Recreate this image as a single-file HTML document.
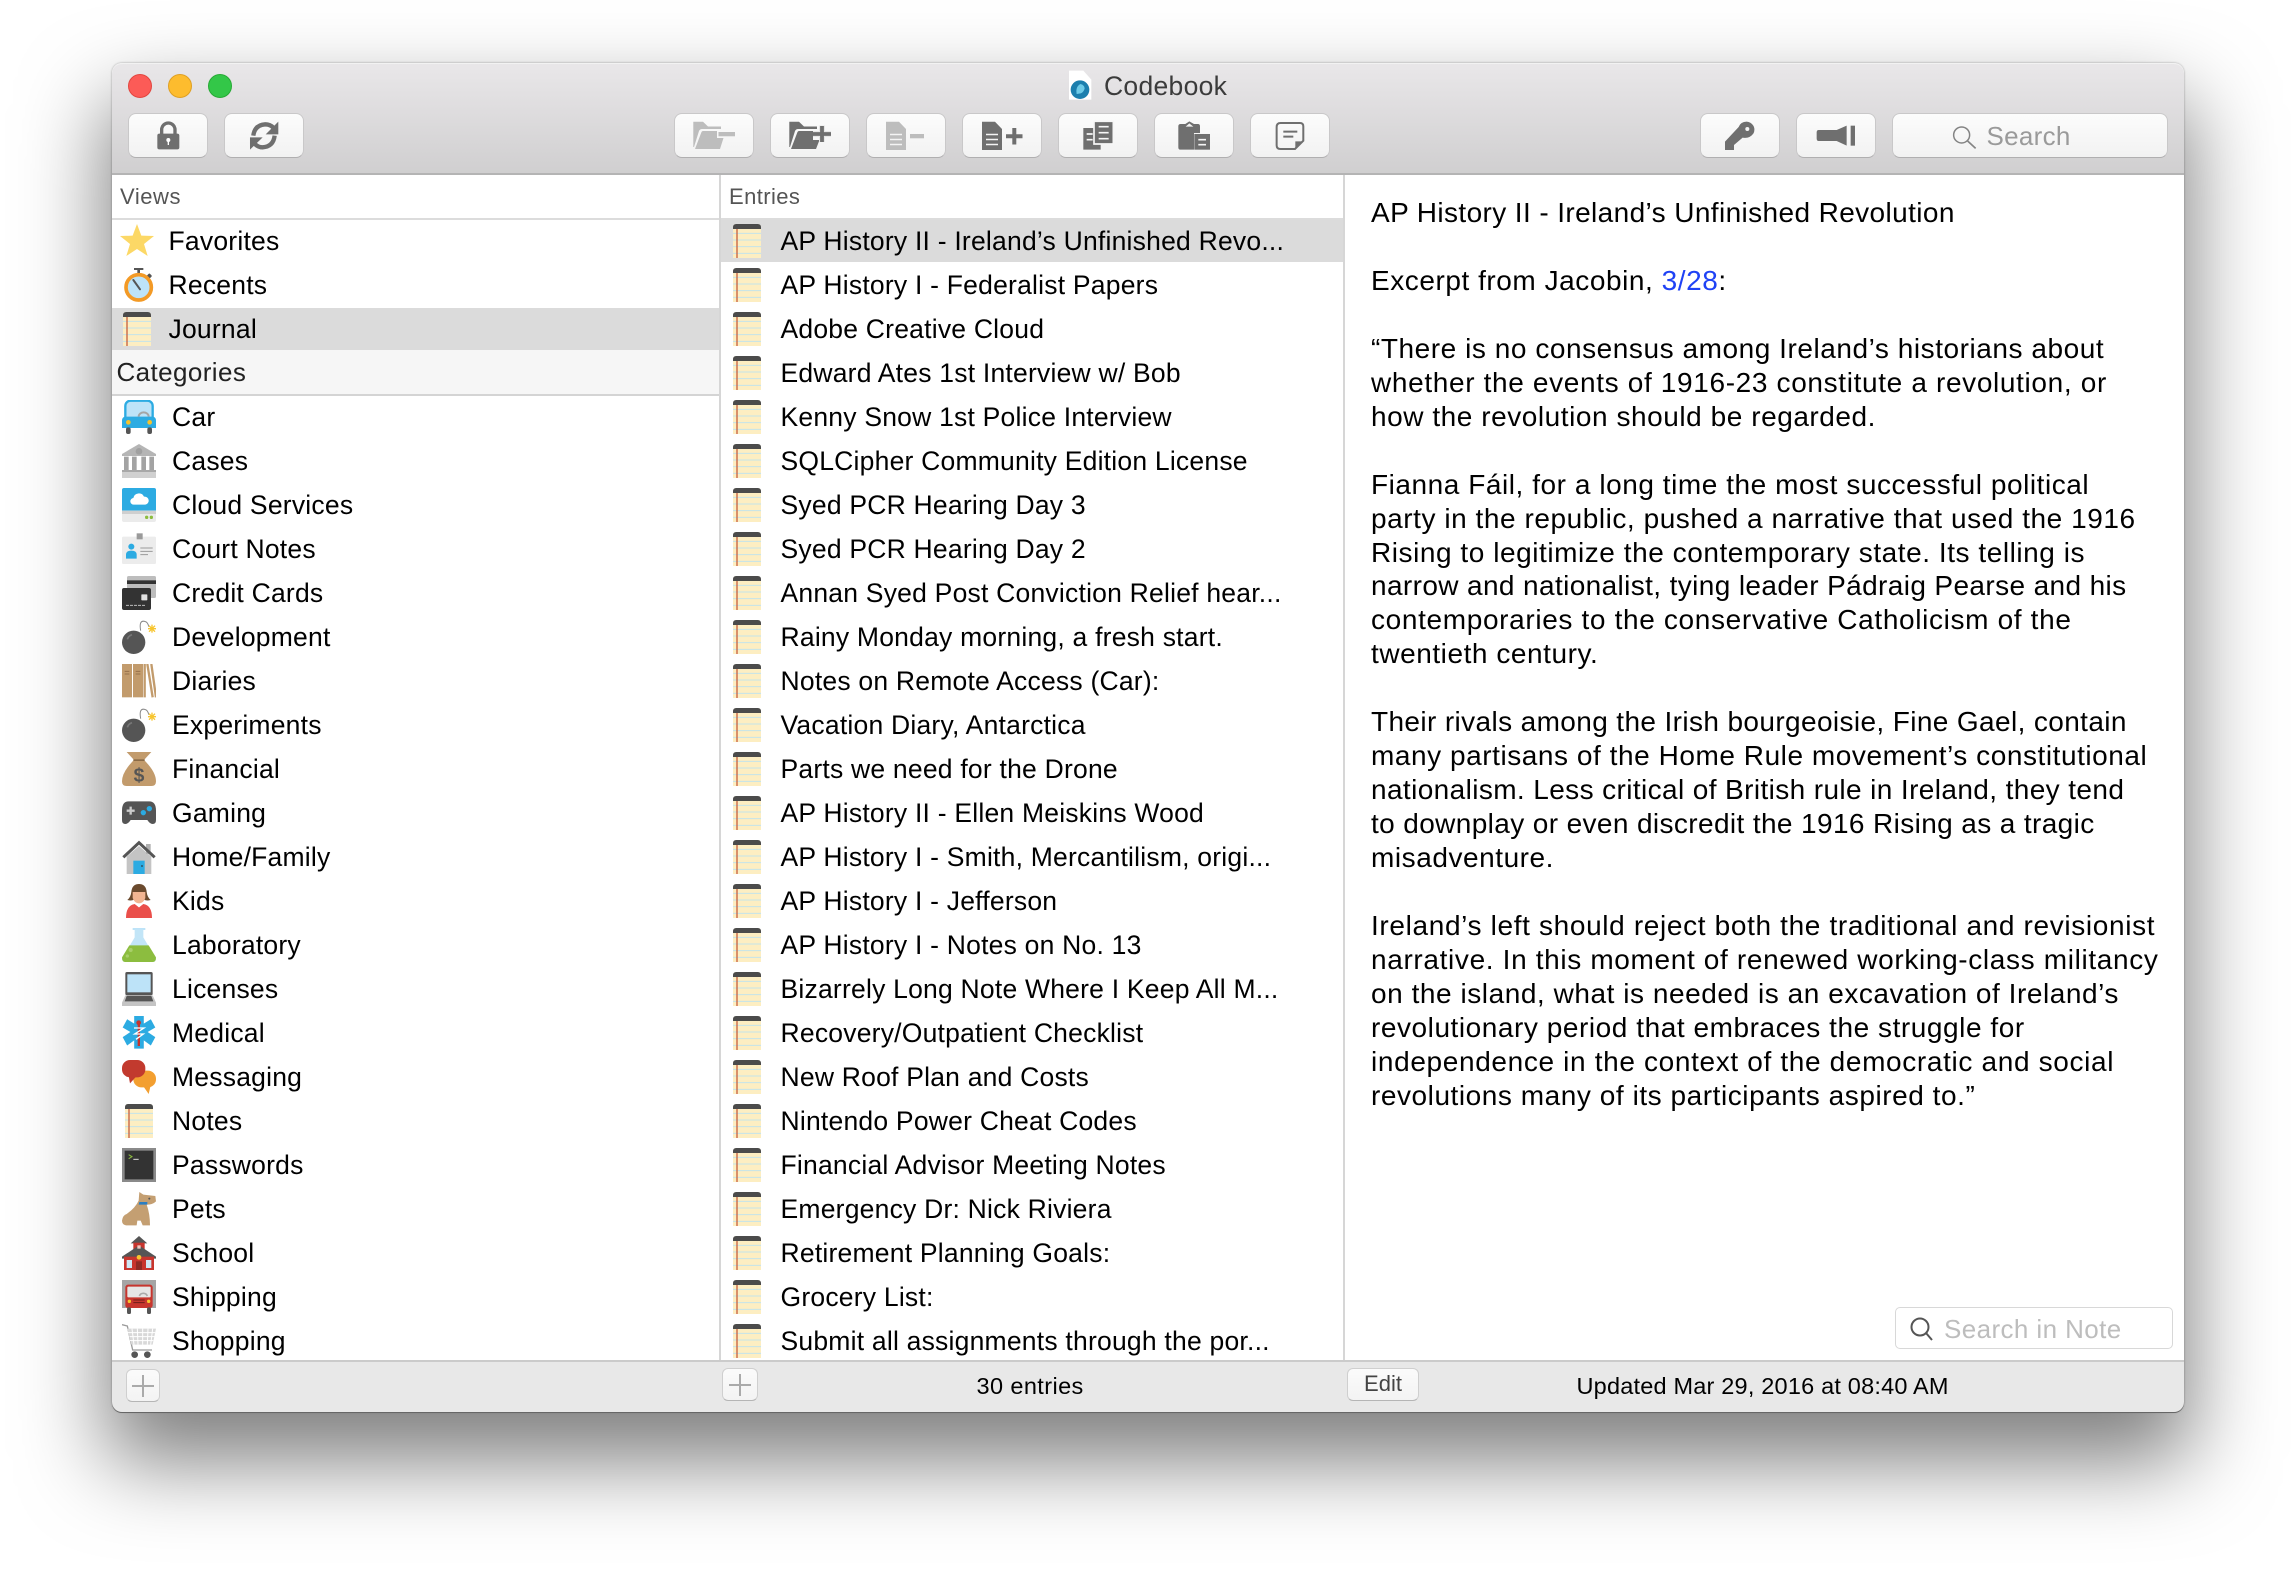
<!DOCTYPE html>
<html><head><meta charset="utf-8"><title>Codebook</title>
<style>
html,body{margin:0;padding:0;background:#fff}
body{width:2296px;height:1572px;position:relative;overflow:hidden;font-family:"Liberation Sans",sans-serif;color:#000}
#win{position:absolute;left:111.5px;top:63px;width:2072.5px;height:1349px;border-radius:10px;background:#fff;box-shadow:0 44px 84px 6px rgba(0,0,0,.5),0 0 2px rgba(0,0,0,.35)}
#tb{position:absolute;left:111.5px;top:63px;width:2072.5px;height:110px;border-radius:10px 10px 0 0;background:linear-gradient(#e9e7e9,#d0cfd0);box-shadow:inset 0 1px 0 #f2f2f2;border-bottom:2px solid #b4b4b4;box-sizing:content-box}
.a{position:absolute;white-space:nowrap}
.b{position:absolute;top:113px;height:45px;box-sizing:border-box;border-radius:8px;background:linear-gradient(#fcfcfc,#f2f2f2);border:1px solid #c9c8c9;border-bottom-color:#b0afb0}
.tl{position:absolute;top:74px;width:24px;height:24px;border-radius:50%;box-sizing:border-box}
.r{position:absolute;height:44px;line-height:44px;font-size:26.5px;letter-spacing:.22px;white-space:nowrap}
.sel{position:absolute;background:#dbdbdb}
svg.i{position:absolute;width:34px;height:34px}
svg.n{position:absolute;width:28px;height:34px}
#v{position:absolute;left:168.5px;top:218.5px}
#c{position:absolute;left:172px;top:394.5px}
#e{position:absolute;left:780.5px;top:218.5px}
#v .r,#c .r,#e .r{position:relative;height:44px}
#tx{position:absolute;left:1371px;top:196px;font-size:28px;letter-spacing:.55px;line-height:33.96px;white-space:nowrap}
.t1{letter-spacing:.39px}.t2{letter-spacing:.38px}.t3{letter-spacing:.65px}
</style></head><body>
<svg width="0" height="0" style="position:absolute"><defs>
<symbol id="note" viewBox="0 0 84 102"><path d="M0 12Q0 0 10 0H74Q84 0 84 12V102H0Z" fill="#fdeec2"/><path d="M0 10Q0 0 10 0H74Q84 0 84 10V15H0Z" fill="#4b4b4b"/><path d="M0 28H84M0 48H84M0 68H84M0 88H84" stroke="#c4e4ea" stroke-width="3"/><rect x="10" y="15" width="4" height="87" fill="#c9623f"/></symbol>
<symbol id="star" viewBox="0 0 102 102"><path d="M51 0L64 35L102 36L72 60L83 96L51 75L19 96L30 60L0 36L38 35Z" fill="#fcd866"/></symbol>
<symbol id="watch" viewBox="0 0 102 102"><rect x="36" y="0" width="28" height="6" fill="#555"/><rect x="46" y="4" width="8" height="16" fill="#555"/><rect x="76" y="18" width="12" height="12" rx="3" transform="rotate(45 82 24)" fill="#555"/><circle cx="50" cy="58" r="38" fill="#bde3f8" stroke="#f39a26" stroke-width="11"/><path d="M34 36L54 64" stroke="#555" stroke-width="6" stroke-linecap="round"/></symbol>
<symbol id="car" viewBox="0 0 102 102"><rect x="10" y="2" width="82" height="66" rx="16" fill="#bde3f8" stroke="#2cabe2" stroke-width="7"/><path d="M50 50a14 12 0 0 1 30 0" fill="none" stroke="#a5a5a5" stroke-width="6"/><path d="M12 50H90Q102 50 102 62V84H0V62Q0 50 12 50Z" fill="#2cabe2"/><circle cx="19" cy="67" r="7" fill="#f6c22c"/><circle cx="83" cy="67" r="7" fill="#f6c22c"/><rect x="12" y="82" width="14" height="20" rx="6" fill="#555"/><rect x="76" y="82" width="14" height="20" rx="6" fill="#555"/></symbol>
<symbol id="bank" viewBox="0 0 102 102"><path d="M51 0L102 30V36H0V30Z" fill="#b5b5b5"/><circle cx="51" cy="22" r="10" fill="#a0a0a0"/><path d="M6 38H20V78H6ZM30 38H44V78H30ZM58 38H72V78H58ZM82 38H96V78H82Z" fill="#a3a3a3"/><rect x="0" y="78" width="102" height="6" fill="#a8a8a8"/><rect x="0" y="84" width="102" height="18" fill="#d0d0d0"/></symbol>
<symbol id="cloud" viewBox="0 0 102 102"><path d="M6 0H96Q102 0 102 6V68H0V6Q0 0 6 0Z" fill="#2cabe2"/><path d="M0 68H102V96Q102 102 96 102H6Q0 102 0 96Z" fill="#ebebeb"/><rect y="68" width="102" height="10" fill="#cfcfcf"/><circle cx="74" cy="88" r="5" fill="#8cbd3f"/><circle cx="88" cy="88" r="5" fill="#8cbd3f"/><path d="M36 50a10 10 0 0 1-2-20a17 17 0 0 1 32-4a12 12 0 0 1 4 24Z" fill="#fff"/></symbol>
<symbol id="badge" viewBox="0 0 102 102"><rect y="14" width="102" height="82" rx="4" fill="#ececec"/><rect x="44" y="4" width="18" height="18" fill="#9a9a9a"/><circle cx="28" cy="44" r="9" fill="#2cabe2"/><path d="M12 80V68Q12 56 28 56Q44 56 44 68V80Z" fill="#2cabe2"/><path d="M55 48H92M55 58H92M55 68H78" stroke="#9a9a9a" stroke-width="3"/></symbol>
<symbol id="cards" viewBox="0 0 102 102"><rect x="15" y="0" width="87" height="66" rx="5" fill="#bdbdbd"/><rect x="15" y="13" width="87" height="11" fill="#333"/><rect y="36" width="87" height="66" rx="6" fill="#333"/><rect x="58" y="55" width="18" height="18" rx="2" fill="#e2e2e2"/><path d="M12 88H72" stroke="#bbb" stroke-width="3" stroke-dasharray="9 3"/></symbol>
<symbol id="bomb" viewBox="0 0 102 102"><path d="M56 32Q50 0 68 4Q78 6 80 20" fill="none" stroke="#888" stroke-width="3"/><circle cx="35" cy="67" r="35" fill="#555"/><path d="M16 58a22 22 0 0 1 14-14" stroke="#777" stroke-width="5" fill="none"/><path d="M90 14V38M78 26H102M81 17L99 35M99 17L81 35" stroke="#f7c52e" stroke-width="4"/></symbol>
<symbol id="books" viewBox="0 0 102 102"><rect width="30" height="100" fill="#c29b6c"/><rect x="33" width="30" height="100" fill="#c29b6c"/><path d="M8 22H22M8 30H22M41 22H55M41 30H55" stroke="#96704a" stroke-width="3"/><path d="M68 100V0M76 0L92 100M88 0L102 100" stroke="#c29b6c" stroke-width="7"/></symbol>
<symbol id="bag" viewBox="0 0 102 102"><path d="M14 0H88L66 24H36Z" fill="#c29b6c"/><path d="M34 26H68Q102 60 102 88Q102 102 88 102H14Q0 102 0 88Q0 60 34 26Z" fill="#c29b6c"/><rect x="34" y="22" width="34" height="5" fill="#8a6a45"/><text x="51" y="89" font-family="Liberation Sans,sans-serif" font-weight="bold" font-size="58" fill="#555" text-anchor="middle">$</text></symbol>
<symbol id="pad" viewBox="0 0 102 102"><path d="M20 16H82Q102 16 102 44V72Q102 84 92 84Q84 84 76 72H26Q18 84 10 84Q0 84 0 72V44Q0 16 20 16Z" fill="#555"/><path d="M26 32V56M14 44H38" stroke="#ccc" stroke-width="7"/><circle cx="64" cy="50" r="8" fill="#2cabe2"/><circle cx="82" cy="38" r="8" fill="#2cabe2"/></symbol>
<symbol id="home" viewBox="0 0 102 102"><path d="M14 50L51 18L88 50V102H14Z" fill="#c4c4c4"/><rect x="72" y="12" width="14" height="30" fill="#b0b0b0"/><path d="M4 52L51 8L98 52" fill="none" stroke="#555" stroke-width="9"/><rect x="34" y="62" width="34" height="40" fill="#2cabe2"/><circle cx="60" cy="78" r="2.5" fill="#333"/></symbol>
<symbol id="kid" viewBox="0 0 102 102"><path d="M51 0Q30 0 28 24Q26 40 16 48Q30 52 36 46H66Q72 52 86 48Q76 40 74 24Q72 0 51 0Z" fill="#6b4a2e"/><path d="M32 24H70V42Q64 58 51 58Q38 58 32 42Z" fill="#f2b592"/><path d="M36 24Q44 10 66 14L70 24Z" fill="#6b4a2e"/><path d="M12 102Q12 64 38 60L51 70L64 60Q90 64 90 102Z" fill="#ea4f4a"/><path d="M38 58L51 70L64 58L51 60Z" fill="#fff"/></symbol>
<symbol id="lab" viewBox="0 0 102 102"><rect x="32" width="38" height="6" fill="#bde3f8"/><path d="M38 4H64V28L102 92Q102 102 92 102H10Q0 102 0 92L38 28Z" fill="#c2e5f7"/><path d="M22 52H80L102 88Q102 102 92 102H10Q0 102 0 88Z" fill="#8cbd3f"/><circle cx="26" cy="66" r="6" fill="#a9cf6a"/><circle cx="16" cy="84" r="5" fill="#a9cf6a"/></symbol>
<symbol id="laptop" viewBox="0 0 102 102"><rect x="10" y="0" width="82" height="70" rx="5" fill="#555"/><rect x="16" y="7" width="70" height="54" fill="#bde3f8"/><path d="M10 70H92L102 92V102H0V92Z" fill="#c4c4c4"/><path d="M14 72H88L94 88H8Z" fill="#555"/></symbol>
<symbol id="med" viewBox="0 0 102 102"><path d="M36 0H66V24L88 10L102 36L78 50L102 66L88 92L66 76V102H36V76L14 92L0 66L24 50L0 36L14 10L36 24Z" fill="#2cabe2" transform="translate(2 0) scale(.96 .96)"/><rect x="47" y="14" width="7" height="76" fill="#c7352e"/><circle cx="50" cy="20" r="7" fill="#c7352e"/><path d="M36 36H66L38 54H64L42 70" fill="none" stroke="#fff" stroke-width="4"/></symbol>
<symbol id="msg" viewBox="0 0 102 102"><rect x="34" y="32" width="68" height="50" rx="24" fill="#f39f30"/><path d="M62 76L80 102L86 76Z" fill="#f39f30"/><rect width="70" height="52" rx="24" fill="#c23a2e"/><path d="M20 48L24 70L44 48Z" fill="#c23a2e"/></symbol>
<symbol id="term" viewBox="0 0 102 102"><rect width="102" height="102" fill="#8a8a8a"/><rect x="8" y="8" width="86" height="86" fill="#333"/><path d="M20 20L30 26L20 32" stroke="#8cbd3f" stroke-width="3" fill="none"/><path d="M34 34H50" stroke="#ddd" stroke-width="3"/></symbol>
<symbol id="dog" viewBox="0 0 102 102"><path d="M52 0L64 8L100 12L102 28Q92 38 74 38Q84 66 84 100H62L56 86H46L44 100H12Q0 98 0 86Q2 70 14 66Q40 48 50 26Z" fill="#c49f72"/><path d="M52 30L76 30L76 38L50 38Z" fill="#2b7ec2"/><circle cx="82" cy="20" r="3" fill="#555"/></symbol>
<symbol id="school" viewBox="0 0 102 102"><path d="M51 0L76 22H26Z" fill="#555"/><rect x="34" y="20" width="34" height="26" fill="#c7352e"/><path d="M51 28L102 62V68H0V62Z" fill="#555"/><rect x="6" y="62" width="90" height="40" fill="#c7352e"/><circle cx="51" cy="64" r="7" fill="#f7c52e"/><rect x="14" y="72" width="16" height="24" fill="#cfe8f5"/><rect x="72" y="72" width="16" height="24" fill="#cfe8f5"/><rect x="42" y="76" width="18" height="26" fill="#8e2a24"/><rect x="46" y="28" width="10" height="10" fill="#f0c8c0"/></symbol>
<symbol id="truck" viewBox="0 0 102 102"><rect width="102" height="84" fill="#a5a5a5"/><rect x="10" y="14" width="82" height="70" rx="8" fill="#c7352e"/><rect x="16" y="20" width="70" height="32" rx="3" fill="#e6e6e6"/><path d="M52 48a13 13 0 0 1 24 0" fill="none" stroke="#aaa" stroke-width="5"/><circle cx="22" cy="64" r="5" fill="#f7c52e"/><circle cx="80" cy="64" r="5" fill="#f7c52e"/><path d="M34 60H68M34 68H68" stroke="#6d1e19" stroke-width="3"/><rect x="15" y="82" width="12" height="20" rx="5" fill="#555"/><rect x="75" y="82" width="12" height="20" rx="5" fill="#555"/></symbol>
<symbol id="cart" viewBox="0 0 102 102"><path d="M0 2L16 6L32 78H90" fill="none" stroke="#9a9a9a" stroke-width="4"/><path d="M16 14H102L92 62H28Z" fill="#d8d8d8"/><path d="M30 14L36 62M46 14L48 62M62 14V62M78 14L76 62M92 14L86 62M18 26H100M22 38H98M24 50H94" stroke="#fff" stroke-width="3"/><circle cx="38" cy="92" r="10" fill="#555"/><circle cx="76" cy="92" r="10" fill="#555"/></symbol>
</defs></svg>

<div id="win"></div>
<div id="tb"></div>
<div class="tl" style="left:128px;background:#fc5b57;border:1px solid #e2463f"></div>
<div class="tl" style="left:168px;background:#fdbc2e;border:1px solid #dfa023"></div>
<div class="tl" style="left:208px;background:#33c748;border:1px solid #27aa35"></div>

<div class="b" style="left:128px;width:80px"></div><div class="b" style="left:224px;width:80px"></div>
<div class="b" style="left:674px;width:80px"></div><div class="b" style="left:770px;width:80px"></div><div class="b" style="left:866px;width:80px"></div><div class="b" style="left:962px;width:80px"></div><div class="b" style="left:1058px;width:80px"></div><div class="b" style="left:1154px;width:80px"></div><div class="b" style="left:1250px;width:80px"></div>
<div class="b" style="left:1700px;width:80px"></div><div class="b" style="left:1796px;width:80px"></div><div class="b" style="left:1892px;width:276px"></div>

<svg class="a" style="left:0;top:0" width="2296" height="1572" viewBox="0 0 2296 1572">
<!-- lock + sync -->
<g transform="translate(120 105) scale(.3333)" fill="#6f6f6f">
<path d="M125 90V74a20 20 0 0 1 40 0V90" fill="none" stroke="#6f6f6f" stroke-width="10"/>
<rect x="112" y="86" width="66" height="47" rx="6"/>
<circle cx="145" cy="105" r="6" fill="#fff"/><rect x="143" y="106" width="4" height="14" fill="#fff"/>
<path d="M400 92Q404 60 436 58Q450 58 460 68" fill="none" stroke="#6f6f6f" stroke-width="13"/>
<path d="M475 50V88H437Z"/>
<path d="M464 92Q460 125 428 127Q414 127 404 116" fill="none" stroke="#6f6f6f" stroke-width="13"/>
<path d="M390 134V97H428Z"/>
</g>
<!-- folder minus -->
<g transform="translate(670 105)" fill="#bdbdbd">
<path d="M23.3 16.7H33L38 21.5H51V24H32Q30 24 29 26L24 42H23.3Z"/>
<path d="M31.5 27Q32 26 33 26H47V33H53.5L50 44H25Z"/>
<rect x="48.5" y="27" width="16.5" height="4.3"/>
</g>
<!-- folder plus -->
<g transform="translate(766 105)">
<g fill="#6f6f6f"><path d="M23.3 16.7H33L38 21.5H51V24H32Q30 24 29 26L24 42H23.3Z"/>
<path d="M31.5 27Q32 26 33 26H47V35H53.5L50 44H25Z"/></g>
<path d="M47 29H65M56 20.5V37" stroke="#e6e6e6" stroke-width="6"/>
<path d="M47 29H65M56 21V37" stroke="#6f6f6f" stroke-width="3.8"/>
</g>
<!-- doc minus -->
<g transform="translate(670 105)">
<path d="M216 16.7H229L236 24V45H216Z" fill="#bdbdbd"/>
<path d="M220 29.5H232M220 34.5H232M220 39.5H232" stroke="#f4f4f4" stroke-width="1.6"/>
<rect x="240" y="29" width="14" height="4.3" fill="#bdbdbd"/>
</g>
<!-- doc plus -->
<g transform="translate(766 105)">
<path d="M216 16.7H229L236 24V45H216Z" fill="#6f6f6f"/>
<path d="M220 29.5H232M220 34.5H232M220 39.5H232" stroke="#f4f4f4" stroke-width="1.6"/>
<path d="M240 31.3H256.5M248.3 23V39.5" stroke="#6f6f6f" stroke-width="4"/>
</g>
<!-- entries -->
<g transform="translate(1050 68) scale(.3333)" fill="#6f6f6f">
<path d="M100 180H152V245H100Z"/><path d="M132 160H190V228H132Z" stroke="#f6f6f6" stroke-width="5"/>
<path d="M146 176H176M146 194H176M146 212H176" stroke="#f6f6f6" stroke-width="5"/>
<path d="M110 198H128M110 215H128" stroke="#f6f6f6" stroke-width="5"/>
<!-- clipboard -->
<path d="M385 175Q385 168 392 168H406L418 160L432 168H444Q450 168 450 175V195H432V245H392Q385 245 385 238Z"/>
<path d="M407 176H430L418 166Z" fill="#f4f4f4"/>
<rect x="433" y="198" width="47" height="47"/>
<path d="M445 215H468M445 230H468" stroke="#f6f6f6" stroke-width="5"/>
<!-- note -->
<path d="M692 165H750Q760 165 760 175V218L735 243H692Q680 243 680 232V177Q680 165 692 165Z" fill="none" stroke="#6f6f6f" stroke-width="6"/>
<path d="M736 242V220H760Z"/>
<path d="M700 191H742M700 206H730" stroke="#6f6f6f" stroke-width="6"/>
</g>
<!-- key, flashlight, search -->
<g transform="translate(1690 105) scale(.3333)" fill="#6f6f6f">
<path d="M170 50a24 24 0 0 1 20 36Q178 102 158 98L132 120V135H105V110L146 66Q152 50 170 50Z"/>
<circle cx="172" cy="72" r="6" fill="#f5f5f5"/>
<path d="M386 75H440L470 62V122L440 108H386Q380 108 380 100V82Q380 75 386 75Z"/>
<rect x="482" y="62" width="13" height="60"/>
<circle cx="815" cy="90" r="24" fill="none" stroke="#848484" stroke-width="4.5"/><path d="M833 108L857 130" stroke="#848484" stroke-width="5"/>
</g>
<!-- title doc -->
<g transform="translate(1050 68) scale(.3333)">
<path d="M57 8H100L124 35V95H57Z" fill="#fff"/><circle cx="90" cy="65" r="28" fill="#1c7fae"/><path d="M80 78Q76 55 92 48Q104 52 104 62Q100 74 92 76Z" fill="#6ecbe8"/>
</g>
</svg>
<div class="a" style="left:1104px;top:70px;font-size:26.5px;letter-spacing:.3px;line-height:32px;color:#3b3b3b">Codebook</div>
<div class="a" style="left:1986.5px;top:120px;font-size:26px;letter-spacing:.3px;line-height:32px;color:#9a9a9a">Search</div>

<!-- column structure -->
<div class="a" style="left:111.5px;top:218px;width:1232px;height:2px;background:#dcdcdc"></div>
<div class="a" style="left:718.5px;top:175px;width:2px;height:1185px;background:#d6d6d6"></div>
<div class="a" style="left:1343px;top:175px;width:2px;height:1185px;background:#d6d6d6"></div>
<div class="a" style="left:120px;top:180px;font-size:22px;letter-spacing:.55px;line-height:34px;color:#555">Views</div>
<div class="a" style="left:729px;top:180px;font-size:22px;letter-spacing:.4px;line-height:34px;color:#555">Entries</div>

<div class="sel" style="left:112px;top:308px;width:606.5px;height:42px"></div>
<div class="sel" style="left:720.5px;top:219.5px;width:622.5px;height:42px"></div>
<div class="a" style="left:112px;top:350px;width:606.5px;height:44px;background:#f6f6f6"></div>
<div class="a" style="left:112px;top:394px;width:606.5px;height:2px;background:#d4d4d4"></div>
<div class="a" style="left:116.5px;top:350px;font-size:26px;letter-spacing:.4px;line-height:44px;color:#222">Categories</div>

<!-- view icons -->
<svg class="i" style="left:120px;top:224px"><use href="#star"/></svg>
<svg class="i" style="left:122px;top:268px"><use href="#watch"/></svg>
<svg class="n" style="left:123px;top:312px"><use href="#note"/></svg>

<div id="v">
<div class="r">Favorites</div>
<div class="r">Recents</div>
<div class="r">Journal</div>
</div>

<!-- category icons -->
<svg class="i" style="left:122px;top:400px"><use href="#car"/></svg>
<svg class="i" style="left:122px;top:444px"><use href="#bank"/></svg>
<svg class="i" style="left:122px;top:488px"><use href="#cloud"/></svg>
<svg class="i" style="left:122px;top:532px"><use href="#badge"/></svg>
<svg class="i" style="left:122px;top:576px"><use href="#cards"/></svg>
<svg class="i" style="left:122px;top:620px"><use href="#bomb"/></svg>
<svg class="i" style="left:122px;top:664px"><use href="#books"/></svg>
<svg class="i" style="left:122px;top:708px"><use href="#bomb"/></svg>
<svg class="i" style="left:122px;top:752px"><use href="#bag"/></svg>
<svg class="i" style="left:122px;top:796px"><use href="#pad"/></svg>
<svg class="i" style="left:122px;top:840px"><use href="#home"/></svg>
<svg class="i" style="left:122px;top:884px"><use href="#kid"/></svg>
<svg class="i" style="left:122px;top:928px"><use href="#lab"/></svg>
<svg class="i" style="left:122px;top:972px"><use href="#laptop"/></svg>
<svg class="i" style="left:122px;top:1016px"><use href="#med"/></svg>
<svg class="i" style="left:122px;top:1060px"><use href="#msg"/></svg>
<svg class="n" style="left:125px;top:1104px"><use href="#note"/></svg>
<svg class="i" style="left:122px;top:1148px"><use href="#term"/></svg>
<svg class="i" style="left:122px;top:1192px"><use href="#dog"/></svg>
<svg class="i" style="left:122px;top:1236px"><use href="#school"/></svg>
<svg class="i" style="left:122px;top:1280px"><use href="#truck"/></svg>
<svg class="i" style="left:122px;top:1324px"><use href="#cart"/></svg>

<div id="c">
<div class="r">Car</div>
<div class="r">Cases</div>
<div class="r">Cloud Services</div>
<div class="r">Court Notes</div>
<div class="r">Credit Cards</div>
<div class="r">Development</div>
<div class="r">Diaries</div>
<div class="r">Experiments</div>
<div class="r">Financial</div>
<div class="r">Gaming</div>
<div class="r">Home/Family</div>
<div class="r">Kids</div>
<div class="r">Laboratory</div>
<div class="r">Licenses</div>
<div class="r">Medical</div>
<div class="r">Messaging</div>
<div class="r">Notes</div>
<div class="r">Passwords</div>
<div class="r">Pets</div>
<div class="r">School</div>
<div class="r">Shipping</div>
<div class="r">Shopping</div>
</div>

<!-- entry icons -->
<svg class="n" style="left:733px;top:224px"><use href="#note"/></svg>
<svg class="n" style="left:733px;top:268px"><use href="#note"/></svg>
<svg class="n" style="left:733px;top:312px"><use href="#note"/></svg>
<svg class="n" style="left:733px;top:356px"><use href="#note"/></svg>
<svg class="n" style="left:733px;top:400px"><use href="#note"/></svg>
<svg class="n" style="left:733px;top:444px"><use href="#note"/></svg>
<svg class="n" style="left:733px;top:488px"><use href="#note"/></svg>
<svg class="n" style="left:733px;top:532px"><use href="#note"/></svg>
<svg class="n" style="left:733px;top:576px"><use href="#note"/></svg>
<svg class="n" style="left:733px;top:620px"><use href="#note"/></svg>
<svg class="n" style="left:733px;top:664px"><use href="#note"/></svg>
<svg class="n" style="left:733px;top:708px"><use href="#note"/></svg>
<svg class="n" style="left:733px;top:752px"><use href="#note"/></svg>
<svg class="n" style="left:733px;top:796px"><use href="#note"/></svg>
<svg class="n" style="left:733px;top:840px"><use href="#note"/></svg>
<svg class="n" style="left:733px;top:884px"><use href="#note"/></svg>
<svg class="n" style="left:733px;top:928px"><use href="#note"/></svg>
<svg class="n" style="left:733px;top:972px"><use href="#note"/></svg>
<svg class="n" style="left:733px;top:1016px"><use href="#note"/></svg>
<svg class="n" style="left:733px;top:1060px"><use href="#note"/></svg>
<svg class="n" style="left:733px;top:1104px"><use href="#note"/></svg>
<svg class="n" style="left:733px;top:1148px"><use href="#note"/></svg>
<svg class="n" style="left:733px;top:1192px"><use href="#note"/></svg>
<svg class="n" style="left:733px;top:1236px"><use href="#note"/></svg>
<svg class="n" style="left:733px;top:1280px"><use href="#note"/></svg>
<svg class="n" style="left:733px;top:1324px"><use href="#note"/></svg>

<div id="e">
<div class="r">AP History II - Ireland’s Unfinished Revo...</div>
<div class="r">AP History I - Federalist Papers</div>
<div class="r">Adobe Creative Cloud</div>
<div class="r">Edward Ates 1st Interview w/ Bob</div>
<div class="r">Kenny Snow 1st Police Interview</div>
<div class="r">SQLCipher Community Edition License</div>
<div class="r">Syed PCR Hearing Day 3</div>
<div class="r">Syed PCR Hearing Day 2</div>
<div class="r">Annan Syed Post Conviction Relief hear...</div>
<div class="r">Rainy Monday morning, a fresh start.</div>
<div class="r">Notes on Remote Access (Car):</div>
<div class="r">Vacation Diary, Antarctica</div>
<div class="r">Parts we need for the Drone</div>
<div class="r">AP History II - Ellen Meiskins Wood</div>
<div class="r">AP History I - Smith, Mercantilism, origi...</div>
<div class="r">AP History I - Jefferson</div>
<div class="r">AP History I - Notes on No. 13</div>
<div class="r">Bizarrely Long Note Where I Keep All M...</div>
<div class="r">Recovery/Outpatient Checklist</div>
<div class="r">New Roof Plan and Costs</div>
<div class="r">Nintendo Power Cheat Codes</div>
<div class="r">Financial Advisor Meeting Notes</div>
<div class="r">Emergency Dr: Nick Riviera</div>
<div class="r">Retirement Planning Goals:</div>
<div class="r">Grocery List:</div>
<div class="r">Submit all assignments through the por...</div>
</div>

<div id="tx"><span class="t1">AP History II - Ireland’s Unfinished Revolution</span><br><br>Excerpt from Jacobin, <span style="color:#1f42f5">3/28</span>:<br><br>“There is no consensus among Ireland’s historians about<br><span class="t3">whether the events of 1916-23 constitute a revolution, or</span><br>how the revolution should be regarded.<br><br>Fianna Fáil, for a long time the most successful political<br>party in the republic, pushed a narrative that used the 1916<br>Rising to legitimize the contemporary state. Its telling is<br><span class="t2">narrow and nationalist, tying leader Pádraig Pearse and his</span><br><span class="t3">contemporaries to the conservative Catholicism of the</span><br>twentieth century.<br><br><span class="t2">Their rivals among the Irish bourgeoisie, Fine Gael, contain</span><br>many partisans of the Home Rule movement’s constitutional<br><span class="t1">nationalism. Less critical of British rule in Ireland, they tend</span><br><span class="t2">to downplay or even discredit the 1916 Rising as a tragic</span><br>misadventure.<br><br><span class="t3">Ireland’s left should reject both the traditional and revisionist</span><br><span class="t3">narrative. In this moment of renewed working-class militancy</span><br>on the island, what is needed is an excavation of Ireland’s<br>revolutionary period that embraces the struggle for<br><span class="t3">independence in the context of the democratic and social</span><br>revolutions many of its participants aspired to.”</div>

<!-- search in note -->
<div class="a" style="left:1895px;top:1307px;width:278px;height:42px;box-sizing:border-box;background:#fff;border:1.5px solid #d8d8d8;border-radius:5px"></div>
<svg class="a" style="left:1905px;top:1315px" width="30" height="30"><circle cx="15" cy="12" r="8.5" fill="none" stroke="#555" stroke-width="2"/><path d="M21 18L27 25" stroke="#555" stroke-width="2"/></svg>
<div class="a" style="left:1944px;top:1312px;font-size:26px;letter-spacing:.4px;line-height:34px;color:#bdbdbd">Search in Note</div>

<!-- footer -->
<div class="a" style="left:111.5px;top:1360px;width:2072.5px;height:52px;background:#e8e8e8;border-top:2px solid #cbcbcb;box-sizing:border-box;border-radius:0 0 10px 10px;box-shadow:0 1px 0 #666"></div>
<div class="a" style="left:126px;top:1369px;width:34px;height:33px;box-sizing:border-box;background:linear-gradient(#fbfbfb,#f3f3f3);border:1px solid #cfcfcf;border-bottom-color:#b5b5b5;border-radius:6px"></div>
<div class="a" style="left:722px;top:1368px;width:36px;height:33px;box-sizing:border-box;background:linear-gradient(#fbfbfb,#f3f3f3);border:1px solid #cfcfcf;border-bottom-color:#b5b5b5;border-radius:6px"></div>
<svg class="a" style="left:0;top:1360px" width="800" height="50"><path d="M132 26H154M143 15V37M729 25H751M740 14V36" stroke="#aaa" stroke-width="2"/></svg>
<div class="a" style="left:1347px;top:1368px;width:72px;height:33px;box-sizing:border-box;background:linear-gradient(#fbfbfb,#f3f3f3);border:1px solid #cfcfcf;border-bottom-color:#b5b5b5;border-radius:6px;font-size:22px;line-height:30px;text-align:center;color:#444">Edit</div>
<div class="a" style="left:976.5px;top:1369px;font-size:23.5px;letter-spacing:.4px;line-height:34px">30 entries</div>
<div class="a" style="left:1576.5px;top:1369px;font-size:23.5px;letter-spacing:.2px;line-height:34px">Updated Mar 29, 2016 at 08:40 AM</div>
</body></html>
